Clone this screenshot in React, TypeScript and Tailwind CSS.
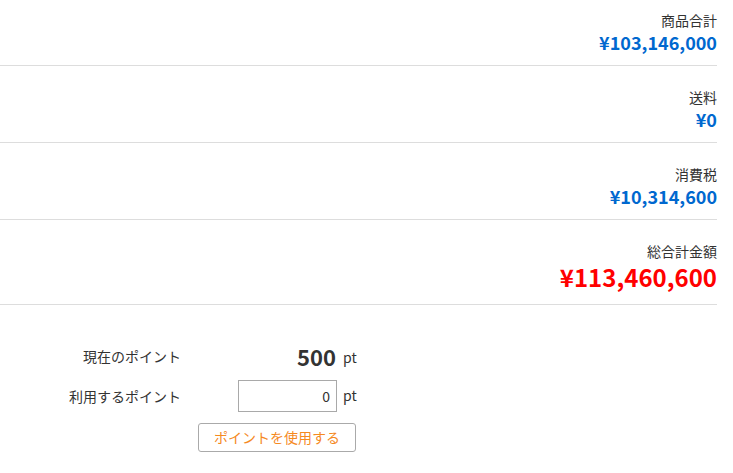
import React from "react";

const font = { fontFamily: '"Noto Sans CJK JP", "Noto Sans", sans-serif' };

function Row({ label, value, big, first }: { label: string; value: string; big?: boolean; first?: boolean }) {
  return (
    <div className={`flex flex-col items-end border-b border-[#dddddd] ${first ? "pt-[10px]" : "pt-[21px]"} pb-[11px]`}>
      <div className="text-[14px] leading-[20px] text-[#333333]">{label}</div>
      {big ? (
        <div className="text-[24px] leading-[32px] font-bold text-[#ff0000]">{value}</div>
      ) : (
        <div className="text-[18px] leading-[24px] font-bold text-[#0068cf]">{value}</div>
      )}
    </div>
  );
}

export default function App() {
  return (
    <div className="w-[733px] h-[473px] bg-white overflow-hidden" style={font}>
      <div className="pr-[16px]">
        <Row first label="商品合計" value="¥103,146,000" />
        <Row label="送料" value="¥0" />
        <Row label="消費税" value="¥10,314,600" />
        <Row big label="総合計金額" value="¥113,460,600" />
      </div>
      <div className="pt-[35px] flex flex-col text-[#333333]">
        <div className="flex items-center h-[32px]">
          <div className="w-[181px] text-right text-[14px]">現在のポイント</div>
          <div className="w-[155px] text-right text-[22px] font-bold leading-[32px]">500</div>
          <div className="pl-[7px] text-[14px] leading-[32px] pt-[2px]">pt</div>
        </div>
        <div className="flex items-center h-[32px] mt-[8px]">
          <div className="w-[181px] text-right text-[14px]">利用するポイント</div>
          <div className="w-[57px]" />
          <input
            readOnly
            value="0"
            className="w-[99px] h-[32px] border border-[#a9a9a9] text-right pr-[6px] text-[14px] text-[#333333] outline-none"
            style={font}
          />
          <div className="pl-[6px] text-[14px] -mt-[2px]">pt</div>
        </div>
        <div className="flex mt-[11px] pl-[198px]">
          <button
            className="w-[158px] h-[29px] border border-[#aaaaaa] rounded-[3px] bg-white text-[14px] text-[#f58a1f]"
            style={font}
          >
            ポイントを使用する
          </button>
        </div>
      </div>
    </div>
  );
}
